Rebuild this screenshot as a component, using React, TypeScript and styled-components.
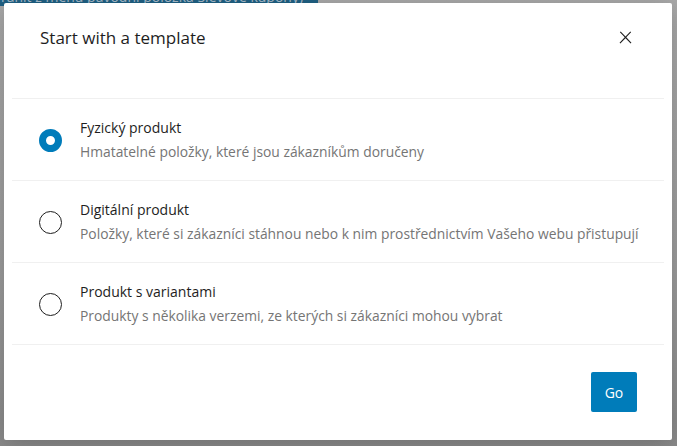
import React, { useState } from "react";
import styled, { createGlobalStyle } from "styled-components";

const BLUE = "#007cba";
const TEXT = "#1e1e1e";
const MUTED = "#757575";
const LINE = "#f0f0f0";

const templates = [
    {
        id: "physical",
        title: "Fyzický produkt",
        description: "Hmatatelné položky, které jsou zákazníkům doručeny",
    },
    {
        id: "digital",
        title: "Digitální produkt",
        description:
            "Položky, které si zákazníci stáhnou nebo k nim prostřednictvím Vašeho webu přistupují",
    },
    {
        id: "variable",
        title: "Produkt s variantami",
        description: "Produkty s několika verzemi, ze kterých si zákazníci mohou vybrat",
    },
];

export default function App() {
    const [selected, setSelected] = useState("physical");

    return (
        <>
            <GlobalStyle />
            <Backdrop>
                <Notice>
                    <NoticeText>ranit z menu pavodní položka Slevové kupóny)</NoticeText>
                </Notice>
                <Modal role="dialog">
                    <Header>
                        <Title>Start with a template</Title>
                        <CloseButton aria-label="Close">
                            <svg width="19" height="19" viewBox="0 0 24 24">
                                <path
                                    fill={TEXT}
                                    d="M13 11.8l6.1-6.3-1-1-6.1 6.2-6.1-6.2-1 1 6.1 6.3-6.5 6.7 1 1 6.5-6.6 6.5 6.6 1-1z"
                                />
                            </svg>
                        </CloseButton>
                    </Header>
                    <List>
                        {templates.map((t) => (
                            <Row key={t.id} onClick={() => setSelected(t.id)}>
                                <Radio checked={selected === t.id} />
                                <RowText>
                                    <RowTitle>{t.title}</RowTitle>
                                    <RowDescription>{t.description}</RowDescription>
                                </RowText>
                            </Row>
                        ))}
                    </List>
                    <Footer>
                        <GoButton>Go</GoButton>
                    </Footer>
                </Modal>
            </Backdrop>
        </>
    );
}

const GlobalStyle = createGlobalStyle`
    html, body {
        margin: 0;
        padding: 0;
    }
    body {
        font-family: "Open Sans", "Noto Sans", sans-serif;
        -webkit-font-smoothing: antialiased;
    }
`;

const Backdrop = styled.div`
    position: relative;
    width: 677px;
    height: 446px;
    overflow: hidden;
    background: linear-gradient(#a9a9a9, #9c9c9c 60%, #8a8a8a);
`;

const Notice = styled.div`
    width: 318px;
    height: 6px;
    background: #1f6184;
    overflow: hidden;
`;

const NoticeText = styled.div`
    margin-top: -11px;
    padding-left: 1px;
    font-size: 14px;
    line-height: 16px;
    color: #a9bccb;
    white-space: nowrap;
`;

const Modal = styled.div`
    position: absolute;
    left: 4px;
    top: 3px;
    width: 668px;
    height: 437px;
    background: #fff;
    border-radius: 2px;
    box-shadow: 0 4px 24px rgba(0, 0, 0, 0.2);
    display: flex;
    flex-direction: column;
`;

const Header = styled.div`
    height: 95px;
    box-sizing: border-box;
    padding: 23px 35px 0 36px;
    display: flex;
    justify-content: space-between;
    align-items: flex-start;
`;

const Title = styled.h1`
    margin: 0;
    font-size: 17px;
    font-weight: 400;
    line-height: 24px;
    color: ${TEXT};
`;

const CloseButton = styled.button`
    width: 24px;
    height: 24px;
    margin-top: -1px;
    padding: 0;
    border: 0;
    background: none;
    display: flex;
    align-items: center;
    justify-content: center;
    cursor: pointer;
`;

const List = styled.div`
    margin: 0 8px;
    border-bottom: 1px solid ${LINE};
`;

const Row = styled.label`
    height: 82px;
    box-sizing: border-box;
    border-top: 1px solid ${LINE};
    padding: 0 27px;
    display: flex;
    align-items: center;
    gap: 18px;
    cursor: pointer;
`;

const Radio = styled.span<{ checked: boolean }>`
    flex: none;
    width: 23px;
    height: 23px;
    box-sizing: border-box;
    border-radius: 50%;
    margin-top: 2px;
    border: ${(p) => (p.checked ? `7px solid ${BLUE}` : `1px solid ${TEXT}`)};
    background: #fff;
`;

const RowText = styled.div`
    display: flex;
    flex-direction: column;
`;

const RowTitle = styled.div`
    font-size: 14px;
    line-height: 24px;
    color: ${TEXT};
`;

const RowDescription = styled.div`
    font-size: 13.85px;
    line-height: 24px;
    color: ${MUTED};
    white-space: nowrap;
`;

const Footer = styled.div`
    padding: 27px 35px;
    display: flex;
    justify-content: flex-end;
`;

const GoButton = styled.button`
    width: 46px;
    height: 40px;
    border: 0;
    border-radius: 2px;
    background: ${BLUE};
    color: #fff;
    font-family: inherit;
    font-size: 14px;
    cursor: pointer;
`;
